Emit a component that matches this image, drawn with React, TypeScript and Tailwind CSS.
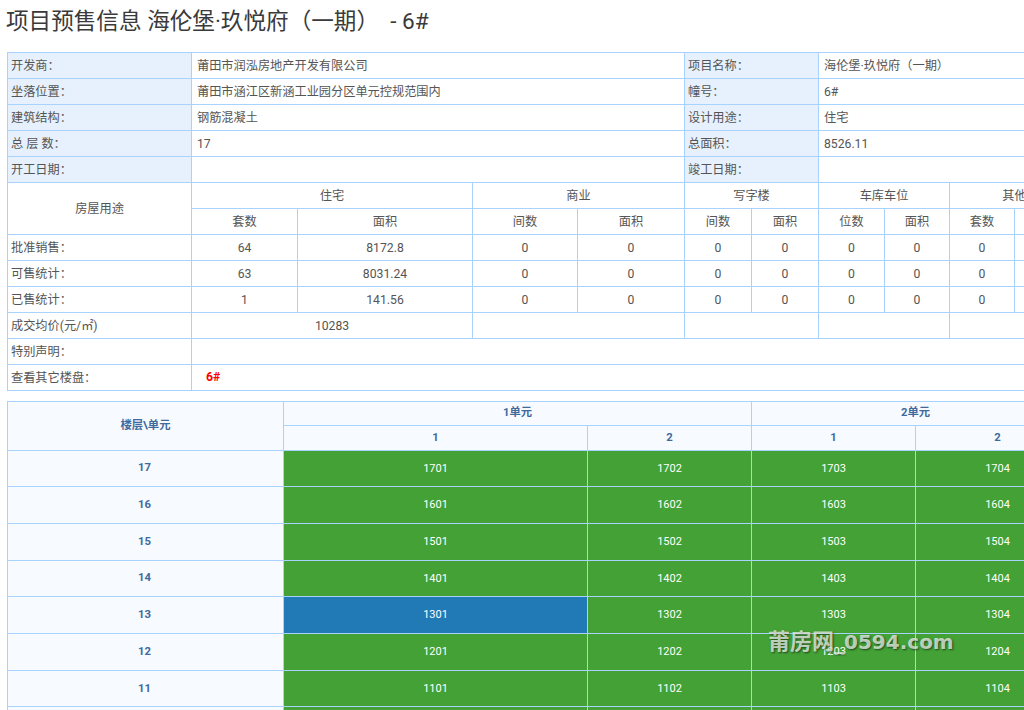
import React from "react";

const labelCell = "border border-[#a8d3ff] bg-[#e6f1fd] pl-[3px] pt-px text-left font-normal";
const plainLabel = "border border-[#a8d3ff] pl-[3px] pt-px text-left font-normal";
const cell = "border border-[#a8d3ff] pl-[5px] pt-px text-left font-normal";
const mid = "border border-[#a8d3ff] pt-px text-center font-normal";
const head = "border border-[#a8d3ff] pt-px";
const infoWidths = [184, 106, 175, 105, 107, 67, 67, 66, 65, 65, 65, 60];

const infoRows = [
  ["开发商：", "莆田市润泓房地产开发有限公司", "项目名称：", "海伦堡·玖悦府（一期）"],
  ["坐落位置：", "莆田市涵江区新涵工业园分区单元控规范围内", "幢号：", "6#"],
  ["建筑结构：", "钢筋混凝土", "设计用途：", "住宅"],
  ["总 层 数：", "17", "总面积：", "8526.11"],
  ["开工日期：", "", "竣工日期：", ""],
];

const statRows = [
  ["批准销售：", "64", "8172.8"],
  ["可售统计：", "63", "8031.24"],
  ["已售统计：", "1", "141.56"],
];

const floors = [17, 16, 15, 14, 13, 12, 11, 10];

// watermark is the only thing sitting on top of the tables
const Watermark = () => (
  <div className="absolute left-[768px] top-[629px] whitespace-nowrap text-[20px] font-bold leading-[26px] text-white/70 [text-shadow:1px_1px_2px_rgba(0,0,0,0.55)] [font-family:'DejaVu_Sans','Noto_Sans_CJK_SC',sans-serif]">
    <span className="text-[22px]">莆房网</span>_0594.com
  </div>
);

export default function App() {
  return (
    <div className="relative h-[710px] w-[1024px] overflow-hidden bg-white pl-[7px] text-[12.2px] text-[#555] [font-family:'Roboto','Noto_Sans_CJK_SC',sans-serif]">
      <h1 className="-ml-px h-[52px] whitespace-pre pt-[6px] text-[22.6px] font-normal leading-[32px] text-[#3a3a3a]">
        项目预售信息 海伦堡·玖悦府（一期）  - 6#
      </h1>

      {/* Project info */}
      <table className="w-[1132px] table-fixed border-collapse">
        <colgroup>
          {infoWidths.map((w, i) => (
            <col key={i} style={{ width: w }} />
          ))}
        </colgroup>
        <tbody>
          {infoRows.map((r) => (
            <tr key={r[0]} className="h-[26px]">
              <td className={labelCell}>{r[0]}</td>
              <td className={cell} colSpan={4}>{r[1]}</td>
              <td className={labelCell} colSpan={2}>{r[2]}</td>
              <td className={cell} colSpan={5}>{r[3]}</td>
            </tr>
          ))}
          <tr className="h-[26px]">
            <td className={mid} rowSpan={2}>房屋用途</td>
            <td className={mid} colSpan={2}>住宅</td>
            <td className={mid} colSpan={2}>商业</td>
            <td className={mid} colSpan={2}>写字楼</td>
            <td className={mid} colSpan={2}>车库车位</td>
            <td className={mid} colSpan={2}>其他</td>
            <td className={mid}></td>
          </tr>
          <tr className="h-[26px]">
            <td className={mid}>套数</td>
            <td className={mid}>面积</td>
            <td className={mid}>间数</td>
            <td className={mid}>面积</td>
            <td className={mid}>间数</td>
            <td className={mid}>面积</td>
            <td className={mid}>位数</td>
            <td className={mid}>面积</td>
            <td className={mid}>套数</td>
            <td className={mid}>面积</td>
            <td className={mid}></td>
          </tr>
          {statRows.map((r) => (
            <tr key={r[0]} className="h-[26px]">
              <td className={plainLabel}>{r[0]}</td>
              <td className={mid}>{r[1]}</td>
              <td className={mid}>{r[2]}</td>
              {[0, 1, 2, 3, 4, 5, 6, 7, 8].map((i) => (
                <td key={i} className={mid}>0</td>
              ))}
            </tr>
          ))}
          <tr className="h-[26px]">
            <td className={plainLabel}>成交均价(元/㎡)</td>
            <td className={mid} colSpan={2}>10283</td>
            <td className={mid} colSpan={2}></td>
            <td className={mid} colSpan={2}></td>
            <td className={mid} colSpan={2}></td>
            <td className={mid} colSpan={3}></td>
          </tr>
          <tr className="h-[26px]">
            <td className={plainLabel}>特别声明：</td>
            <td className={cell} colSpan={11}></td>
          </tr>
          <tr className="h-[26px]">
            <td className={plainLabel}>查看其它楼盘：</td>
            <td className="border border-[#a8d3ff] pl-3.5 text-left font-bold text-[#f00]" colSpan={11}>6#</td>
          </tr>
        </tbody>
      </table>

      {/* Floor grid */}
      <table className="mt-[9.5px] w-[1072px] table-fixed border-collapse text-[11px]">
        <colgroup>
          <col className="w-[276px]" />
          <col className="w-[304px]" />
          <col className="w-[164px]" />
          <col className="w-[164px]" />
          <col className="w-[164px]" />
        </colgroup>
        <thead>
          <tr className="h-[24.5px] bg-[#f7fbff] text-[11.3px] font-bold text-[#3f6a9e]">
            <th className={head} rowSpan={2}>楼层\单元</th>
            <th className={head} colSpan={2}>1单元</th>
            <th className={head} colSpan={2}>2单元</th>
          </tr>
          <tr className="h-[24.5px] bg-[#f7fbff] text-[11.3px] font-bold text-[#3f6a9e]">
            <th className={head}>1</th>
            <th className={head}>2</th>
            <th className={head}>1</th>
            <th className={head}>2</th>
          </tr>
        </thead>
        <tbody>
          {floors.map((f) => (
            <tr key={f} className="h-[36.7px]">
              <td className="border border-[#a8d3ff] bg-[#f7fbff] pr-0.5 pt-px text-center text-[11.3px] font-bold text-[#3f6a9e]">{f}</td>
              {[1, 2, 3, 4].map((u) => (
                <td
                  key={u}
                  className={
                    f === 13 && u === 1
                      ? "border border-[#a8d3ff] bg-[#217ab5] pt-px text-center text-white"
                      : "border border-[#a8d3ff] bg-[#43a136] pt-px text-center text-white"
                  }
                >
                  {f}0{u}
                </td>
              ))}
            </tr>
          ))}
        </tbody>
      </table>

      <Watermark />
    </div>
  );
}
